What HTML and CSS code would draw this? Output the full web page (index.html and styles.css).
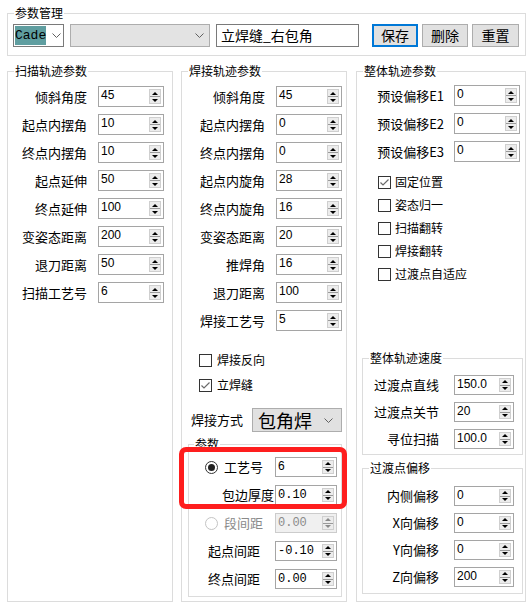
FILE: index.html
```html
<!DOCTYPE html>
<html lang="zh-CN">
<head>
<meta charset="utf-8">
<title>参数管理</title>
<link rel="stylesheet" href="styles.css">
</head>
<body>
<div class="dialog">
  <fieldset class="grp top">
    <legend>参数管理</legend>
    <div class="toprow">
      <div class="combo cade"><span class="sel">Cade</span><svg class="chev" width="9" height="5" viewBox="0 0 9 5"><polyline points="0.5,0.5 4.5,4.5 8.5,0.5"/></svg></div>
      <div class="combo gray"><span class="txt"></span><svg class="chev" width="9" height="5" viewBox="0 0 9 5"><polyline points="0.5,0.5 4.5,4.5 8.5,0.5"/></svg></div>
      <div class="edit">立焊缝_右包角</div>
      <button class="btn focus">保存</button>
      <button class="btn">删除</button>
      <button class="btn">重置</button>
    </div>
  </fieldset>

  <div class="cols">
    <fieldset class="grp col scan">
      <legend>扫描轨迹参数</legend>
      <div class="rows">
        <span class="lbl">倾斜角度</span><div class="spin"><span class="v">45</span><span class="b"><i class="up"></i><i class="dn"></i></span></div>
        <span class="lbl">起点内摆角</span><div class="spin"><span class="v">10</span><span class="b"><i class="up"></i><i class="dn"></i></span></div>
        <span class="lbl">终点内摆角</span><div class="spin"><span class="v">10</span><span class="b"><i class="up"></i><i class="dn"></i></span></div>
        <span class="lbl">起点延伸</span><div class="spin"><span class="v">50</span><span class="b"><i class="up"></i><i class="dn"></i></span></div>
        <span class="lbl">终点延伸</span><div class="spin"><span class="v">100</span><span class="b"><i class="up"></i><i class="dn"></i></span></div>
        <span class="lbl">变姿态距离</span><div class="spin"><span class="v">200</span><span class="b"><i class="up"></i><i class="dn"></i></span></div>
        <span class="lbl">退刀距离</span><div class="spin"><span class="v">50</span><span class="b"><i class="up"></i><i class="dn"></i></span></div>
        <span class="lbl">扫描工艺号</span><div class="spin"><span class="v">6</span><span class="b"><i class="up"></i><i class="dn"></i></span></div>
      </div>
    </fieldset>

    <fieldset class="grp col weld">
      <legend>焊接轨迹参数</legend>
      <div class="rows">
        <span class="lbl">倾斜角度</span><div class="spin"><span class="v">45</span><span class="b"><i class="up"></i><i class="dn"></i></span></div>
        <span class="lbl">起点内摆角</span><div class="spin"><span class="v">0</span><span class="b"><i class="up"></i><i class="dn"></i></span></div>
        <span class="lbl">终点内摆角</span><div class="spin"><span class="v">0</span><span class="b"><i class="up"></i><i class="dn"></i></span></div>
        <span class="lbl">起点内旋角</span><div class="spin"><span class="v">28</span><span class="b"><i class="up"></i><i class="dn"></i></span></div>
        <span class="lbl">终点内旋角</span><div class="spin"><span class="v">16</span><span class="b"><i class="up"></i><i class="dn"></i></span></div>
        <span class="lbl">变姿态距离</span><div class="spin"><span class="v">20</span><span class="b"><i class="up"></i><i class="dn"></i></span></div>
        <span class="lbl">推焊角</span><div class="spin"><span class="v">16</span><span class="b"><i class="up"></i><i class="dn"></i></span></div>
        <span class="lbl">退刀距离</span><div class="spin"><span class="v">100</span><span class="b"><i class="up"></i><i class="dn"></i></span></div>
        <span class="lbl">焊接工艺号</span><div class="spin"><span class="v">5</span><span class="b"><i class="up"></i><i class="dn"></i></span></div>
      </div>
      <div class="checks weldchecks">
        <div class="cb"><span class="box"></span>焊接反向</div>
        <div class="cb"><span class="box"><svg width="11" height="11" viewBox="0 0 11 11"><polyline points="1.5,5.5 4,8 9.5,2.5"/></svg></span>立焊缝</div>
      </div>
      <div class="mode">
        <span class="lbl">焊接方式</span>
        <div class="combo big"><span class="txt">包角焊</span><svg class="chev" width="9" height="5" viewBox="0 0 9 5"><polyline points="0.5,0.5 4.5,4.5 8.5,0.5"/></svg></div>
      </div>
      <fieldset class="grp sub params">
        <legend>参数</legend>
        <div class="prow">
          <div class="pl r1"><span class="radio on"></span><span>工艺号</span></div>
          <div class="spin s2"><span class="v">6</span><span class="b"><i class="up"></i><i class="dn"></i></span></div>
        </div>
        <div class="prow">
          <div class="pl r2"><span>包边厚度</span></div>
          <div class="spin s2"><span class="v mono">0.10</span><span class="b"><i class="up"></i><i class="dn"></i></span></div>
        </div>
        <div class="prow">
          <div class="pl r1 dis"><span class="radio off"></span><span>段间距</span></div>
          <div class="spin s2 disabled"><span class="v mono">0.00</span><span class="b"><i class="up"></i><i class="dn"></i></span></div>
        </div>
        <div class="prow">
          <div class="pl r3"><span>起点间距</span></div>
          <div class="spin s2"><span class="v mono">-0.10</span><span class="b"><i class="up"></i><i class="dn"></i></span></div>
        </div>
        <div class="prow">
          <div class="pl r3"><span>终点间距</span></div>
          <div class="spin s2"><span class="v mono">0.00</span><span class="b"><i class="up"></i><i class="dn"></i></span></div>
        </div>
      </fieldset>
    </fieldset>

    <fieldset class="grp col whole">
      <legend>整体轨迹参数</legend>
      <div class="rows">
        <span class="lbl">预设偏移E1</span><div class="spin"><span class="v">0</span><span class="b"><i class="up"></i><i class="dn"></i></span></div>
        <span class="lbl">预设偏移E2</span><div class="spin"><span class="v">0</span><span class="b"><i class="up"></i><i class="dn"></i></span></div>
        <span class="lbl">预设偏移E3</span><div class="spin"><span class="v">0</span><span class="b"><i class="up"></i><i class="dn"></i></span></div>
      </div>
      <div class="checks wholechecks">
        <div class="cb"><span class="box"><svg width="11" height="11" viewBox="0 0 11 11"><polyline points="1.5,5.5 4,8 9.5,2.5"/></svg></span>固定位置</div>
        <div class="cb"><span class="box"></span>姿态归一</div>
        <div class="cb"><span class="box"></span>扫描翻转</div>
        <div class="cb"><span class="box"></span>焊接翻转</div>
        <div class="cb"><span class="box"></span>过渡点自适应</div>
      </div>
      <fieldset class="grp sub speed">
        <legend>整体轨迹速度</legend>
        <div class="rows r3c">
          <span class="lbl">过渡点直线</span><div class="spin s3"><span class="v">150.0</span><span class="b"><i class="up"></i><i class="dn"></i></span></div>
          <span class="lbl">过渡点关节</span><div class="spin s3"><span class="v">20</span><span class="b"><i class="up"></i><i class="dn"></i></span></div>
          <span class="lbl">寻位扫描</span><div class="spin s3"><span class="v">100.0</span><span class="b"><i class="up"></i><i class="dn"></i></span></div>
        </div>
      </fieldset>
      <fieldset class="grp sub offset">
        <legend>过渡点偏移</legend>
        <div class="rows r3c">
          <span class="lbl">内侧偏移</span><div class="spin s3"><span class="v">0</span><span class="b"><i class="up"></i><i class="dn"></i></span></div>
          <span class="lbl">X向偏移</span><div class="spin s3"><span class="v">0</span><span class="b"><i class="up"></i><i class="dn"></i></span></div>
          <span class="lbl">Y向偏移</span><div class="spin s3"><span class="v">0</span><span class="b"><i class="up"></i><i class="dn"></i></span></div>
          <span class="lbl">Z向偏移</span><div class="spin s3"><span class="v">200</span><span class="b"><i class="up"></i><i class="dn"></i></span></div>
        </div>
      </fieldset>
    </fieldset>
  </div>

  <div class="highlight"></div>
</div>
</body>
</html>
```

FILE: styles.css
```css
* { box-sizing: border-box; }
html, body { margin: 0; padding: 0; background: #ffffff; }
body {
  width: 532px;
  height: 607px;
  overflow: hidden;
  font-family: "Noto Sans CJK SC", "Noto Sans", sans-serif;
  font-size: 13px;
  line-height: 16px;
  color: #000;
}
.dialog { position: relative; padding: 5px 6px 0 7px; }

.grp {
  margin: 0;
  padding: 0;
  min-width: 0;
  border: 1px solid #dcdcdc;
}
.grp > legend {
  font-size: 12px;
  line-height: 16px;
  padding: 0 1px;
  margin-left: 6px;
}

/* top */
.top { width: 519px; }
.toprow {
  display: flex;
  align-items: stretch;
  height: 23px;
  margin: 3px 0 8px 5px;
}
.combo {
  display: flex;
  align-items: center;
  border: 1px solid #adadad;
  background: #e5e5e5;
}
.chev { fill: none; stroke: #606060; stroke-width: 1; flex: none; }
.combo.cade {
  width: 51px;
  background: #fff;
  border-color: #7a7a7a;
  padding: 1px 0 1px 1px;
}
.combo.cade .sel {
  background: #5f9ea0;
  font-family: "Liberation Mono", monospace;
  font-size: 13px;
  line-height: 19px;
  height: 19px;
  width: 31px;
}
.combo.cade .chev { margin-left: 6px; }
.combo.gray { width: 140px; margin-left: 6px; justify-content: flex-end; padding-right: 5px; background: #e3e3e3; }
.edit {
  width: 143px;
  margin-left: 6px;
  border: 1px solid #7a7a7a;
  font-size: 14px;
  line-height: 21px;
  padding-left: 4px;
  background: #fff;
}
.btn {
  font-family: "Noto Sans CJK SC", sans-serif;
  font-size: 14px;
  line-height: 19px;
  padding: 0;
  margin: 0 0 0 4px;
  width: 46px;
  background: #e1e1e1;
  border: 1px solid #adadad;
  color: #000;
}
.btn.focus { margin-left: 13px; border: 2px solid #0078d7; }
.btn:last-child { width: 47px; }

/* columns */
.cols {
  display: flex;
  align-items: stretch;
  height: 539px;
  margin-top: 7px;
}
.col { display: flex; flex-direction: column; }
.scan { width: 166px; }
.weld { width: 166px; margin-left: 8px; }
.whole { width: 170px; margin-left: 9px; }

.rows {
  display: grid;
  grid-template-columns: 1fr 66px;
  grid-auto-rows: 21px;
  row-gap: 7px;
  column-gap: 11px;
  align-items: center;
  padding: 7px 8px 0 4px;
}
.weld .rows { padding-right: 4px; }
.whole .rows { padding: 6px 5px 0 4px; column-gap: 10px; }
.lbl { text-align: right; font-size: 13px; line-height: 16px; white-space: nowrap; }

/* spin box */
.spin {
  display: flex;
  height: 21px;
  border: 1px solid #a5a5a5;
  background: #fff;
  padding: 2px 2px 2px 2px;
}
.spin .v {
  flex: 1;
  font-family: "Liberation Sans", sans-serif;
  font-size: 12px;
  line-height: 13px;
}
.spin .v.mono { font-family: "Liberation Mono", monospace; padding-top: 1px; }
.spin .b {
  width: 12px;
  display: flex;
  flex-direction: column;
  border: 1px solid #cfcfcf;
  background: #ececec;
}
.spin .b i {
  flex: 1;
  display: flex;
  align-items: center;
  justify-content: center;
}
.spin .b i + i { border-top: 1px solid #9a9a9a; }
.spin .b i::before {
  content: "";
  width: 0;
  height: 0;
  border-left: 3px solid transparent;
  border-right: 3px solid transparent;
}
.spin .b i.up::before { border-bottom: 3px solid #000; }
.spin .b i.dn::before { border-top: 3px solid #000; }
.spin.disabled { background: #f0f0f0; border-color: #cccccc; }
.spin.disabled .v { color: #8a8a8a; }
.spin.disabled .b i.up::before { border-bottom-color: #8a8a8a; }
.spin.disabled .b i.dn::before { border-top-color: #8a8a8a; }

/* checkboxes */
.checks { display: flex; flex-direction: column; }
.cb {
  display: flex;
  align-items: center;
  height: 16px;
  font-size: 12px;
  line-height: 16px;
  white-space: nowrap;
}
.cb .box {
  width: 13px;
  height: 13px;
  border: 1px solid #333;
  background: #fff;
  margin-right: 5px;
  display: flex;
  align-items: center;
  justify-content: center;
}
.cb .box svg { fill: none; stroke: #6a6a6a; stroke-width: 1.2; }
.weldchecks { padding-left: 17px; margin-top: 21px; row-gap: 9px; }
.wholechecks { padding-left: 21px; margin-top: 12px; row-gap: 7px; }
.wholechecks .cb .box { margin-right: 4px; }

/* weld mode */
.mode {
  display: flex;
  align-items: center;
  height: 24px;
  margin-top: 15px;
  padding-left: 9px;
}
.mode .lbl { width: 60px; text-align: left; }
.combo.big {
  width: 90px;
  height: 24px;
  margin-left: 1px;
  background: #e1e1e1;
  padding: 0 8px 0 5px;
  justify-content: space-between;
}
.combo.big .txt { font-size: 18px; line-height: 22px; }

/* sub groups */
.sub > legend { font-size: 12px; line-height: 14px; }
.params { margin: 5px 4px 0 6px; padding: 6px 4px 7px 0; }
.params > legend { margin-left: 5px; }
.prow {
  display: flex;
  align-items: center;
  justify-content: space-between;
  height: 20px;
  margin-bottom: 8px;
}
.prow:last-child { margin-bottom: 0; }
.prow .spin.s2 { width: 62px; height: 20px; }
.pl { display: flex; align-items: center; font-size: 13px; line-height: 16px; white-space: nowrap; }
.pl.r1 { padding-left: 16px; }
.pl.r1 .radio { margin-right: 6px; }
.pl.r2 { padding-left: 33px; }
.pl.r3 { padding-left: 19px; }
.pl.dis { color: #8a8a8a; }
.radio {
  width: 13px;
  height: 13px;
  border-radius: 50%;
  border: 1px solid #333;
  background: #fff;
  display: flex;
  align-items: center;
  justify-content: center;
}
.radio.on::after {
  content: "";
  width: 7px;
  height: 7px;
  border-radius: 50%;
  background: #222;
}
.radio.off { border-color: #c4c4c4; }

.speed { margin: 69px 2px 0 5px; padding: 10px 0 5px 0; }
.offset { margin: 6px 2px 0 5px; padding: 11px 0 6px 0; }
.rows.r3c {
  grid-template-columns: 1fr 60px;
  grid-auto-rows: 20px;
  column-gap: 15px;
  padding: 0 8px 0 4px;
}
.speed .rows.r3c { row-gap: 7px; }
.offset .rows.r3c { row-gap: 7px; }
.spin.s3 { height: 20px; }

/* annotation overlay */
.highlight {
  position: absolute;
  left: 179px;
  top: 447px;
  width: 168px;
  height: 62px;
  border: 5px solid #fe1e1e;
  border-radius: 7px;
  pointer-events: none;
}
```
